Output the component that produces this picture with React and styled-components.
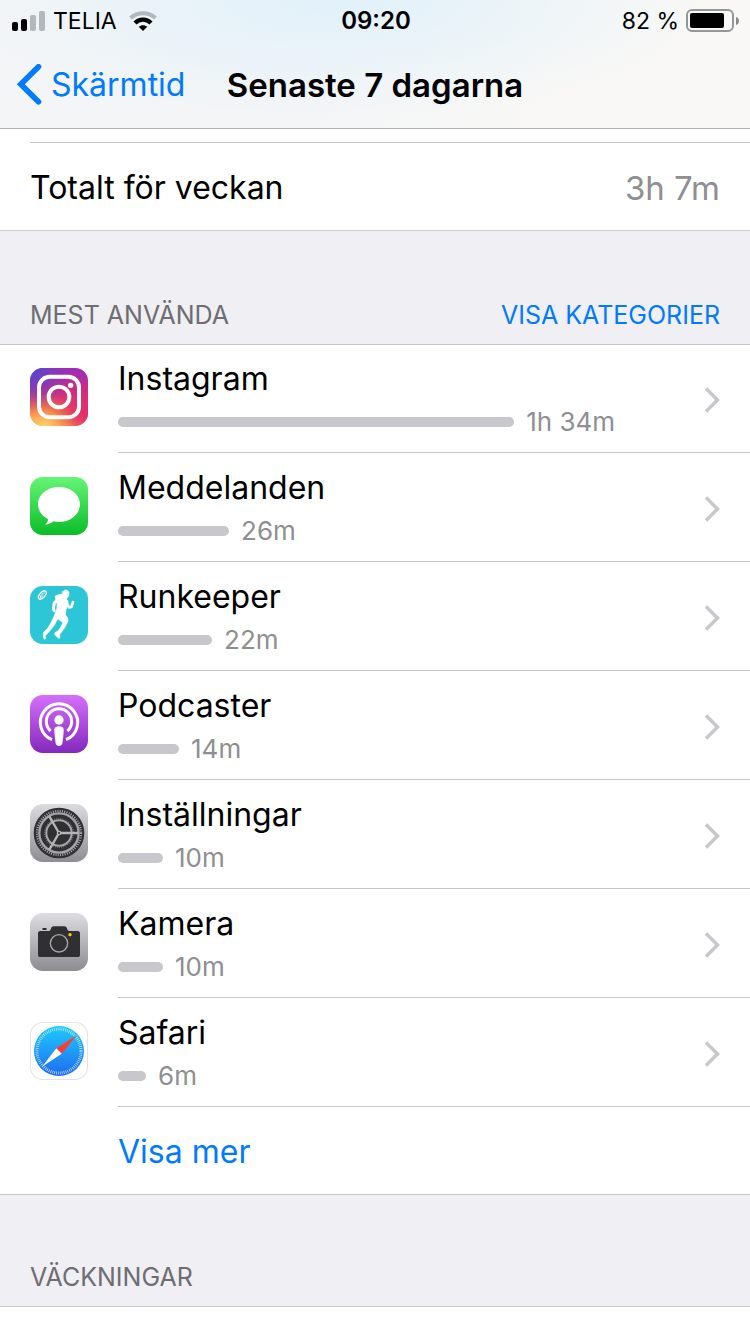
import React from 'react'
import styled, { createGlobalStyle } from 'styled-components'

const blue = '#007aff'
const line = '#c8c7cc'
const gray = '#8e8e93'

const usage = [
   { name: 'Instagram', time: '1h 34m', seconds: 5640, Icon: InstagramIcon },
   { name: 'Meddelanden', time: '26m', seconds: 1581, Icon: MessagesIcon },
   { name: 'Runkeeper', time: '22m', seconds: 1339, Icon: RunkeeperIcon },
   { name: 'Podcaster', time: '14m', seconds: 869, Icon: PodcastsIcon },
   { name: 'Inställningar', time: '10m', seconds: 641, Icon: SettingsIcon },
   { name: 'Kamera', time: '10m', seconds: 641, Icon: CameraIcon },
   { name: 'Safari', time: '6m', seconds: 399, Icon: SafariIcon },
]

// the longest bar fills this much of the text column
const longestBar = 67.6

function App() {
   return (
      <Page>
         <GlobalStyle />
         <TopBar>
            <StatusBar />
            <NavBar>
               <BackLink href="#skarmtid">
                  <svg width="26" height="42" viewBox="0 0 26 42" fill="none" stroke="currentColor" strokeWidth="5.600" strokeLinecap="round" strokeLinejoin="miter">
                     <path d="M22.500 2.800 4.800 20.300l17.700 17.500" />
                  </svg>
                  Skärmtid
               </BackLink>
               <NavTitle>Senaste 7 dagarna</NavTitle>
            </NavBar>
         </TopBar>
         <main>
            <Summary>
               <TotalRow>
                  <span>Totalt för veckan</span>
                  <Total>3h 7m</Total>
               </TotalRow>
            </Summary>
            <SectionHeader>
               <SectionTitle>Mest använda</SectionTitle>
               <SectionButton type="button">Visa kategorier</SectionButton>
            </SectionHeader>
            <UsageList>
               {usage.map((app) => (
                  <UsageRow key={app.name} {...app} />
               ))}
            </UsageList>
            <MoreButton type="button">Visa mer</MoreButton>
            <SectionHeader $last>
               <SectionTitle>Väckningar</SectionTitle>
            </SectionHeader>
         </main>
      </Page>
   )
}

export default App

function StatusBar() {
   return (
      <Status>
         <StatusSide>
            <svg width="34" height="20" viewBox="0 0 34 20">
               <rect x="0" y="11" width="6" height="9" rx="2" />
               <rect x="9" y="8" width="6" height="12" rx="2" />
               <rect x="18" y="4" width="6" height="16" rx="2" fill="#b2b8bc" />
               <rect x="27" y="0" width="6" height="20" rx="2" fill="#b2b8bc" />
            </svg>
            <Carrier>TELIA</Carrier>
            <svg width="28" height="20" viewBox="0 0 28 20" fill="none">
               <path d="M1.500 7C8.500.5 19.500.5 26.500 7" stroke="#b2b8bc" strokeWidth="4" />
               <path d="M6 12c4.500-4.500 11.500-4.500 16 0" stroke="#000" strokeWidth="4.400" />
               <path d="M14 20l-4.300-4.300c2.400-2.100 6.200-2.100 8.600 0z" fill="#000" />
            </svg>
         </StatusSide>
         <Clock>09:20</Clock>
         <StatusSide $end>
            <span>82 %</span>
            <svg width="54" height="24" viewBox="0 0 54 24">
               <rect x="1" y="1" width="46" height="21" rx="5" fill="none" stroke="#92979a" strokeWidth="2" />
               <rect x="4" y="4" width="34" height="15" rx="2" />
               <path d="M50 8c4 1 4 7 0 8z" fill="#8a8d90" />
            </svg>
         </StatusSide>
      </Status>
   )
}

function UsageRow({ name, time, seconds, Icon }) {
   return (
      <UsageItem>
         <UsageLink href={'#' + name.toLowerCase()}>
            <Icon />
            <UsageBody>
               <UsageText>
                  <AppName>{name}</AppName>
                  <Meter>
                     <Bar style={{ width: `${(seconds / usage[0].seconds) * longestBar}%` }} />
                     <span>{time}</span>
                  </Meter>
               </UsageText>
               <svg width="18" height="28" viewBox="0 0 18 28" fill="none" stroke="#c7c7cc" strokeWidth="3.500">
                  <path d="M2 2.500 13.500 14 2 25.500" />
               </svg>
            </UsageBody>
         </UsageLink>
      </UsageItem>
   )
}

function Tile({ fill, children, ...rest }) {
   return (
      <TileSvg viewBox="0 0 174 174" aria-hidden="true" {...rest}>
         <rect width="174" height="174" rx="38" fill={fill} />
         {children}
      </TileSvg>
   )
}

function InstagramIcon() {
   return (
      <Tile fill="url(#ig)">
         <defs>
            <linearGradient id="ig" x1="0.65" y1="0" x2="0.4" y2="1">
               <stop offset="0" stopColor="#a02bb8" />
               <stop offset="0.4" stopColor="#d42c7c" />
               <stop offset="0.75" stopColor="#f0584a" />
               <stop offset="1" stopColor="#fdb850" />
            </linearGradient>
            <radialGradient id="igBlue" cx="0" cy="0" r="0.8">
               <stop offset="0" stopColor="#4650d6" />
               <stop offset="0.4" stopColor="#6a3fc8" stopOpacity="0.8" />
               <stop offset="1" stopColor="#8a35b8" stopOpacity="0" />
            </radialGradient>
            <radialGradient id="igYellow" cx="0.25" cy="1" r="0.55">
               <stop offset="0" stopColor="#ffd26a" />
               <stop offset="1" stopColor="#fb7a3a" stopOpacity="0" />
            </radialGradient>
            <radialGradient id="igPink" cx="1" cy="0.75" r="0.6">
               <stop offset="0" stopColor="#e02a70" />
               <stop offset="1" stopColor="#e02a70" stopOpacity="0" />
            </radialGradient>
         </defs>
         <rect width="174" height="174" rx="38" fill="url(#igPink)" />
         <rect width="174" height="174" rx="38" fill="url(#igBlue)" />
         <rect width="174" height="174" rx="38" fill="url(#igYellow)" />
         <rect x="27" y="26" width="120" height="122" rx="32" fill="none" stroke="#fff" strokeWidth="12" />
         <circle cx="87" cy="87" r="31" fill="none" stroke="#fff" strokeWidth="12" />
         <circle cx="122" cy="52" r="8" fill="#fff" />
      </Tile>
   )
}

function MessagesIcon() {
   return (
      <Tile fill="url(#msg)">
         <defs>
            <linearGradient id="msg" x1="0" y1="0" x2="0" y2="1">
               <stop offset="0" stopColor="#66f577" />
               <stop offset="1" stopColor="#0bbd29" />
            </linearGradient>
         </defs>
         <path
            fill="#fff"
            d="M87 30c35 0 63 23 63 52s-28 53-63 53c-6 0-11-1-16-2-7 5-16 9-26 10 6-4 9-10 9-16-18-10-30-26-30-45 0-29 28-52 63-52z"
         />
      </Tile>
   )
}

function RunkeeperIcon() {
   return (
      <Tile fill="#2dc6d6">
         <g fill="none" stroke="#fff" strokeLinecap="round" strokeLinejoin="round">
            <ellipse cx="37" cy="27" rx="15" ry="8" transform="rotate(-48 37 27)" strokeWidth="4" />
            <path d="M31 33c3-8 7-11 12-12M29 38l9-8" strokeWidth="3" />
            <path d="M84 42 73 50l-3 20 3 4" strokeWidth="9" />
            <path d="M108 46l9 18 7-1 5-15" strokeWidth="8" />
         </g>
         <path
            fill="#fff"
            stroke="#fff"
            strokeWidth="2"
            strokeLinejoin="round"
            d="M99 20c0-5 4-8 9-8s9 4 9 10-1 11-5 13l-3 5 5 5-1 14-5 12-2 16 7 8 1 11-9 17-9 14-7 7 1 11-4 2-12-11 1-6 9-5 8-11 7-14-14-10-4 1-8 17-16 19-11 12 1 9-4 2-3-7 1-14 12-12 11-18 8-18 4-10 5-15 0-13-4-12-1-11 13-5 10-2-2-7z"
         />
      </Tile>
   )
}

function PodcastsIcon() {
   return (
      <Tile fill="url(#pod)">
         <defs>
            <linearGradient id="pod" x1="0" y1="0" x2="0" y2="1">
               <stop offset="0" stopColor="#d56ffb" />
               <stop offset="1" stopColor="#8329bd" />
            </linearGradient>
         </defs>
         <g fill="none" stroke="#fff" strokeWidth="9" strokeLinecap="butt">
            <path d="M66 134a56 56 0 1 1 42 0" />
            <path d="M62 108a38 38 0 1 1 50 0" />
         </g>
         <circle cx="87" cy="75" r="14" fill="#fff" />
         <path d="M73 103c0-12 28-12 28 0 0 13-2 29-4 42-2 11-18 11-20 0-2-13-4-29-4-42z" fill="#fff" />
      </Tile>
   )
}

function SettingsIcon() {
   return (
      <Tile fill="url(#set)">
         <defs>
            <linearGradient id="set" x1="0" y1="0" x2="0" y2="1">
               <stop offset="0" stopColor="#dcdce0" />
               <stop offset="1" stopColor="#8e8e93" />
            </linearGradient>
         </defs>
         <circle cx="87" cy="87" r="76" fill="#303032" />
         <g fill="none" stroke="#a6a6aa">
            <circle cx="87" cy="87" r="66" strokeWidth="7" strokeDasharray="3.200 3.712" />
            <circle cx="87" cy="87" r="59" strokeWidth="7" />
            <circle cx="87" cy="87" r="43" strokeWidth="4" strokeDasharray="2.800 3.625" strokeOpacity="0.6" />
            <circle cx="87" cy="87" r="38" strokeWidth="6" />
         </g>
         <path d="M87 87h58M87 87 58 37M87 87l-29 50" stroke="#b6b6b9" strokeWidth="7" />
         <circle cx="87" cy="87" r="7" fill="#b6b6b9" />
         <circle cx="87" cy="87" r="3" fill="#303032" />
      </Tile>
   )
}

function CameraIcon() {
   return (
      <Tile fill="url(#cam)">
         <defs>
            <linearGradient id="cam" x1="0" y1="0" x2="0" y2="1">
               <stop offset="0" stopColor="#dedde2" />
               <stop offset="1" stopColor="#8d8c91" />
            </linearGradient>
         </defs>
         <g fill="#303032">
            <rect x="37" y="45" width="13" height="6" rx="2" />
            <path d="M31 54h26c3 0 4-2 5-5 2-5 4-9 9-9h32c5 0 7 4 9 9 1 3 3 5 6 5h25c5 0 7 3 7 7v64c0 4-2 7-7 7H31c-5 0-7-3-7-7V61c0-4 2-7 7-7z" />
         </g>
         <circle cx="87" cy="91" r="26" fill="none" stroke="#a8a8ac" strokeWidth="4" />
         <circle cx="120" cy="65" r="5" fill="#fc0" />
      </Tile>
   )
}

function SafariIcon() {
   return (
      <Tile fill="#e3e3e3">
         <defs>
            <linearGradient id="saf" x1="0" y1="0" x2="0" y2="1">
               <stop offset="0" stopColor="#1fcafc" />
               <stop offset="1" stopColor="#1e6cf0" />
            </linearGradient>
         </defs>
         <rect x="3" y="3" width="168" height="168" rx="35" fill="#fff" />
         <circle cx="87" cy="87" r="75" fill="url(#saf)" />
         <circle cx="87" cy="87" r="66" fill="none" stroke="#fff" strokeOpacity="0.8" strokeWidth="9" strokeDasharray="2 3.760" />
         <path d="M140 40 95 95 79 79z" fill="#ff3b30" />
         <path d="M36 134 79 79l16 16z" fill="#fff" />
      </Tile>
   )
}

const GlobalStyle = createGlobalStyle`
   * {
      box-sizing: border-box;
   }
   body {
      margin: 0;
      background: #fff;
      color: #000;
      font-family: Inter, "Liberation Sans", sans-serif;
      font-size: 32px;
      line-height: 40px;
   }
   button {
      padding: 0;
      border: 0;
      background: none;
      font: inherit;
   }
   a {
      color: inherit;
      text-decoration: none;
   }
   svg {
      display: block;
      flex: none;
   }
`

const Page = styled.div`
   min-height: 100vh;
`

const TopBar = styled.header`
   border-bottom: 1px solid #b2b2b2;
   background:
      radial-gradient(ellipse at 45% 0, #e1f1fa, transparent 65%),
      linear-gradient(100deg, #f3f5f7 40%, #f9f8f6 75%);
`

const Status = styled.div`
   display: grid;
   grid-template-columns: 1fr auto 1fr;
   align-items: center;
   height: 41px;
   padding: 0 10px 0 12px;
   font-size: 24px;
`

const StatusSide = styled.div`
   display: flex;
   align-items: center;
   justify-content: ${(props) => (props.$end ? 'flex-end' : 'flex-start')};
   gap: 7px;
   font-size: 23px;
`

const Carrier = styled.span`
   margin-right: 5px;
`

const Clock = styled.span`
   font-weight: 600;
`

const NavBar = styled.nav`
   display: grid;
   grid-template-columns: 1fr auto 1fr;
   align-items: center;
   height: 87px;
   padding: 0 16px;
`

const BackLink = styled.a`
   display: flex;
   align-items: center;
   gap: 9px;
   color: ${blue};
`

const NavTitle = styled.h1`
   margin: 0;
   font-size: 33px;
   font-weight: 600;
`

const Summary = styled.section`
   padding: 13px 0 0 30px;
   border-bottom: 1px solid ${line};
`

const TotalRow = styled.div`
   display: flex;
   align-items: center;
   justify-content: space-between;
   height: 88px;
   padding: 2px 30px 0 0;
   border-top: 1px solid ${line};
`

const Total = styled.span`
   color: ${gray};
   font-size: 33px;
`

const SectionHeader = styled.div`
   display: flex;
   align-items: flex-end;
   justify-content: space-between;
   height: ${(props) => (props.$last ? '112px' : '113px')};
   padding: 0 30px 13px;
   border-bottom: ${(props) => (props.$last ? `1px solid ${line}` : 'none')};
   background: #efeff4;
   font-size: 25px;
   line-height: 32px;
   text-transform: uppercase;
`

const SectionTitle = styled.h2`
   margin: 0;
   color: #6d6d72;
   font-size: inherit;
   font-weight: 400;
`

const SectionButton = styled.button`
   color: ${blue};
   text-transform: inherit;
`

const UsageList = styled.ul`
   margin: 0;
   padding: 0;
   list-style: none;
   box-shadow: inset 0 1px 0 ${line};
`

const UsageItem = styled.li`
   height: 109px;
`

const UsageLink = styled.a`
   display: flex;
   gap: 30px;
   height: 100%;
   padding-left: 30px;
`

const TileSvg = styled.svg`
   width: 58px;
   height: 58px;
   margin-top: 24px;
`

const UsageBody = styled.div`
   display: flex;
   flex: 1;
   align-items: center;
   padding: 3px 28px 0 0;
   border-bottom: 1px solid ${line};
`

const UsageText = styled.div`
   flex: 1;
`

const AppName = styled.div`
   line-height: 40px;
`

const Meter = styled.div`
   display: flex;
   align-items: center;
   gap: 12px;
   margin-top: 5px;
   color: ${gray};
   font-size: 26px;
   line-height: 36px;
`

const Bar = styled.div`
   height: 10px;
   border-radius: 5px;
   background: #c7c7cc;
`

const MoreButton = styled.button`
   display: block;
   width: 100%;
   height: 88px;
   padding: 2px 0 0 118px;
   border-bottom: 1px solid ${line};
   color: ${blue};
   text-align: left;
`
